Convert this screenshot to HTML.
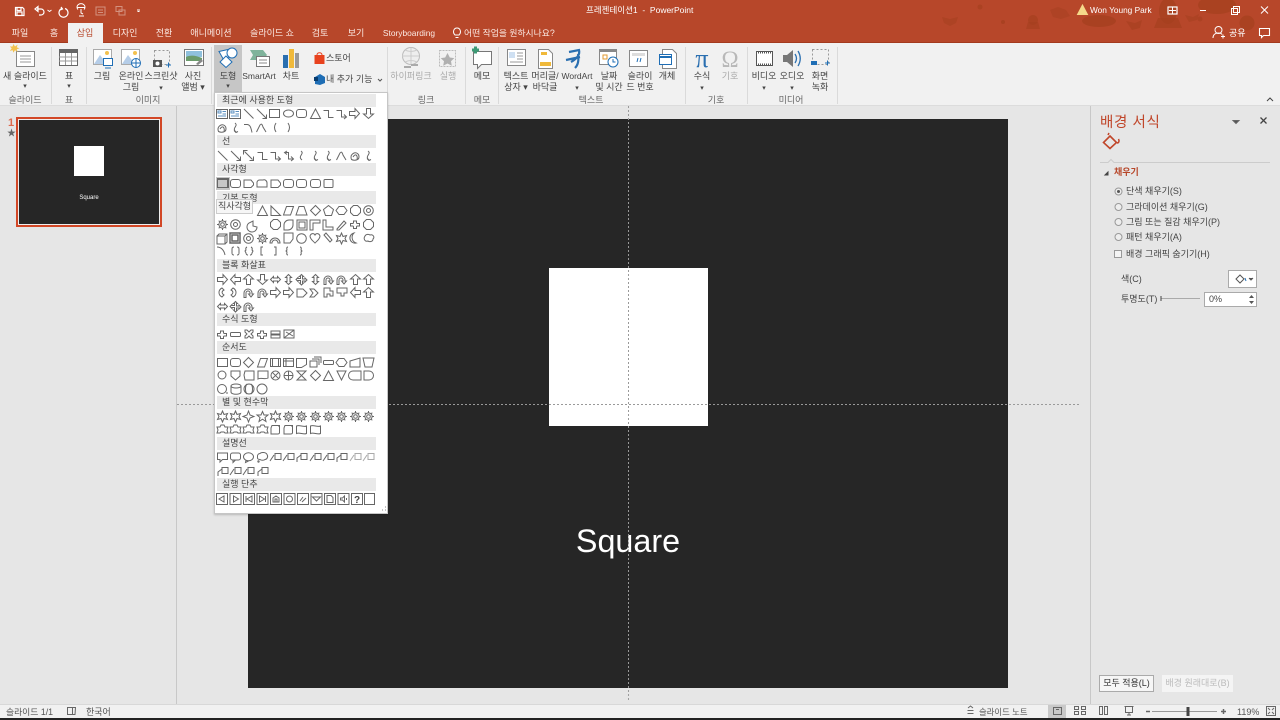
<!DOCTYPE html>
<html lang="ko"><head><meta charset="utf-8"><title>프레젠테이션1 - PowerPoint</title>
<style>
*{box-sizing:border-box}
html,body{margin:0;padding:0;width:1280px;height:720px;overflow:hidden;background:#e6e6e6;font-family:"Liberation Sans","Noto Sans CJK KR",sans-serif;font-size:9px;color:#444}
.a{position:absolute}
.t{position:absolute;transform:translateX(-50%);white-space:nowrap;line-height:10.5px;text-align:center}
.l{position:absolute;white-space:nowrap;line-height:12px}
.w{color:#fff}
.tab{color:#fbe9e3;top:28px;font-size:9px;line-height:11px}
.g{color:#666;top:95px}
.d{color:#aaa}
.hd{position:absolute;left:217px;width:159px;height:13px;background:#e9e9e9;color:#444;padding-left:5px;line-height:12px;font-size:9px}
.sep{position:absolute;top:47px;width:1px;height:57px;background:#dadada}
</style></head><body>
<div class="a" style="left:0;top:0;width:1280px;height:43px;background:#b7472a"></div>
<div class="a" style="left:0;top:42px;width:1280px;height:1px;background:#a33a1e"></div>
<svg class="a" style="left:900px;top:0" width="380" height="42" fill="#a5401f">
<path d="M42 17l8 2 8-2-2 6-6 3-6-3z" opacity=".55"/>
<circle cx="80" cy="7" r="2.500" opacity=".7"/><circle cx="103" cy="22" r="2" opacity=".8"/><circle cx="18" cy="0" r="0"/>
<circle cx="133" cy="20" r="5" opacity=".7"/><path d="M128 22h10l2 7h-14z" opacity=".6"/>
<path d="M150 10l8-3 8 3 4 6-9 3-8-2z" opacity=".5"/>
<ellipse cx="199" cy="21" rx="17" ry="6" opacity=".8"/>
<ellipse cx="268" cy="11" rx="9" ry="13" opacity=".75"/><path d="M258 18h20l4 10h-28z" opacity=".7"/>
<path d="M226 21l9 2 7-3-2 8-8 2z" opacity=".6"/><path d="M285 15l8 2 6-3-2 6-8 2z" opacity=".55"/>
<ellipse cx="317" cy="5" rx="19" ry="9" opacity=".75"/>
<circle cx="347" cy="23" r="7.500" opacity=".75"/><circle cx="300" cy="19" r="2.500" opacity=".6"/>
</svg>
<!-- QAT -->
<svg class="a" style="left:0;top:0" width="150" height="22" fill="none" stroke="#fff" stroke-width="1.2">
<path d="M15.500 7.500h7l1.500 1.500v6.500h-8.500z"/><path d="M17 8v2.500h4V8M17 15v-3h5v3"/>
<path d="M35 9l3-2.500v5zM37 9h4a3 3 0 0 1 0 6h-2"/><path d="M47.500 10l2 1.500 2-1.500" stroke-width="1"/>
<path d="M65 8.500a4.500 4.500 0 1 1-3 0M61 7l1.500 2-2 .8"/>
<path d="M77 7.500h8M78 9.500a4 3.500 0 1 1 6 0 M81 9v4l2 1M79 16h5" stroke-width="1"/>
<g opacity=".4" stroke-width="1"><rect x="96" y="7" width="9" height="8"/><path d="M98 10h5M98 12.500h5"/><rect x="116" y="6.500" width="6" height="5"/><rect x="119" y="10" width="6" height="5"/></g>
<path d="M137 10h3M137.500 11.500h2" stroke-width="1"/>
</svg>
<div class="l w" style="left:586px;top:4px;font-size:8.500px">프레젠테이션1&nbsp; -&nbsp; PowerPoint</div>
<svg class="a" style="left:1076px;top:3px" width="204" height="36" fill="none" stroke="#fff">
<path d="M6.500 2l5 9.500h-10z" fill="#f5d98a" stroke="#f5d98a"/>
<rect x="92" y="4" width="9" height="7" stroke-width="1.200"/><path d="M96.500 4v7M93 7.500h7" stroke-width="1"/>
<path d="M124 7.500h6"/><rect x="155.500" y="5.500" width="6" height="6"/><rect x="157.500" y="3.500" width="6" height="6"/>
<path d="M185 3.500l7 7M192 3.500l-7 7"/>
</svg>
<div class="l w" style="left:1090px;top:4px;font-size:8.300px">Won Young Park</div>
<svg class="a" style="left:1210px;top:24px" width="70" height="18" fill="none" stroke="#fff"><circle cx="8.500" cy="6" r="3.500"/><path d="M3 14c0-3 2-5 5.500-5 1.500 0 3 .5 3.500 1.500M11 12.500h4M13 10.500v4"/><path d="M49.500 4.500h10v7h-6l-2 2v-2h-2z" stroke-width="1.100"/></svg>
<div class="l w" style="left:1229px;top:27px;font-size:9px">공유</div>
<!-- Tabs -->
<div class="a" style="left:68px;top:23px;width:35px;height:20px;background:#f1f1f1"></div>
<div class="t tab" style="left:20px">파일</div><div class="t tab" style="left:54px">홈</div>
<div class="t tab" style="left:85px;color:#b7472a">삽입</div><div class="t tab" style="left:125px">디자인</div>
<div class="t tab" style="left:164px">전환</div><div class="t tab" style="left:211px">애니메이션</div>
<div class="t tab" style="left:272px">슬라이드 쇼</div><div class="t tab" style="left:320px">검토</div>
<div class="t tab" style="left:356px">보기</div><div class="t tab" style="left:409px;font-size:8.400px">Storyboarding</div>
<svg class="a" style="left:452px;top:27px" width="10" height="12" fill="none" stroke="#fff"><path d="M3 8c-3-3-1-7 2-7s5 4 2 7zM3.500 10.500h3"/></svg>
<div class="l tab" style="left:464px;font-size:8.800px">어떤 작업을 원하시나요?</div>
<!-- Ribbon -->
<div class="a" style="left:0;top:43px;width:1280px;height:62px;background:#f1f1f1"></div>
<div class="a" style="left:0;top:105px;width:1280px;height:1px;background:#dcdcdc"></div>
<div class="a" style="left:214px;top:45px;width:28px;height:47px;background:#c6c6c6"></div>
<div class="sep" style="left:51px"></div><div class="sep" style="left:86px"></div><div class="sep" style="left:211px"></div><div class="sep" style="left:387px"></div><div class="sep" style="left:465px"></div><div class="sep" style="left:498px"></div><div class="sep" style="left:685px"></div><div class="sep" style="left:747px"></div><div class="sep" style="left:837px"></div>
<svg class="a" style="left:0;top:43px" width="860" height="50" fill="none" stroke-width="1">
<!-- new slide -->
<rect x="16.500" y="8.500" width="18" height="15" fill="#fff" stroke="#888"/><path d="M20 13h11M20 16h11M20 19h11" stroke="#999"/><path d="M15 4l2 3 3-2-1 3 3 1-3 1 1 3-3-2-2 3-1-3-3 1 2-3-2-2 3 0z" fill="#f2c14e" stroke="#f2c14e" transform="translate(3 -1) scale(.7)"/>
<!-- table -->
<rect x="59.500" y="6.500" width="18" height="16" fill="#fff" stroke="#666"/><rect x="59" y="6" width="19" height="4" fill="#666"/><path d="M59 14h18M59 18h18M65.500 10v12M71.500 10v12" stroke="#999"/>
<!-- picture -->
<rect x="93.500" y="6.500" width="18" height="15" fill="#fff" stroke="#aaa"/><path d="M94 21l6-9 7 9z" fill="#b5cde8"/><circle cx="107" cy="10" r="2" fill="#f2c14e"/><rect x="103.500" y="15.500" width="9" height="7" fill="#fff" stroke="#1f6eb5"/><path d="M105 25h6" stroke="#1f6eb5"/>
<!-- online -->
<rect x="121.500" y="6.500" width="18" height="15" fill="#fff" stroke="#aaa"/><path d="M122 21l6-9 7 9z" fill="#b5cde8"/><circle cx="135" cy="10" r="2" fill="#f2c14e"/><circle cx="136" cy="20" r="4.500" fill="#fff" stroke="#1f6eb5"/><path d="M131.500 20h9M136 15.500v9" stroke="#1f6eb5"/>
<!-- screenshot -->
<rect x="154.500" y="7.500" width="15" height="14" stroke="#999" stroke-dasharray="2 2"/><rect x="153" y="17" width="9" height="7" fill="#555"/><circle cx="157.500" cy="20.500" r="2" fill="#fff"/><path d="M166 22h5M168.500 19.500v5" stroke="#1f6eb5"/>
<!-- album -->
<rect x="184.500" y="6.500" width="19" height="16" fill="#fff" stroke="#777"/><rect x="186" y="8" width="16" height="6" fill="#8fc0dc"/><path d="M186 14c4-2 9-2 16 1v3h-16z" fill="#6b9b6b"/><path d="M196 21l5-5 2 2-5 4z" fill="#888"/>
<!-- shapes -->
<path d="M219 8.500l9-2 1 7-5 4z" fill="#fff" stroke="#1f6eb5"/><circle cx="232" cy="10" r="5" fill="#fff" stroke="#1f6eb5"/><path d="M226 13l6 6-6 5.500-6-5.500z" fill="#fff" stroke="#1f6eb5"/>
<!-- smartart -->
<path d="M250 7h13l4 5-4 5h-13l3-5z" fill="#7fb39b"/><rect x="256.500" y="13.500" width="13" height="10" fill="#fff" stroke="#777"/><path d="M259 17h8M259 20h8" stroke="#888"/>
<!-- chart -->
<rect x="283" y="12" width="5" height="13" fill="#2a6fb0"/><rect x="289" y="6" width="5" height="19" fill="#f0b93a"/><rect x="295" y="10" width="4" height="15" fill="#999"/>
<!-- store -->
<rect x="314.500" y="12" width="10" height="9" fill="#e8421e"/><path d="M317 12c0-3 5-3 5 0" stroke="#e8421e"/>
<path d="M315 34l5-3 5 3v6l-5 2-5-1z" fill="#1f6eb5"/><rect x="314" y="34" width="4" height="4" fill="#083c6e"/>
<path d="M378 36l2 2 2-2" stroke="#555"/>
<!-- hyperlink -->
<circle cx="411" cy="13" r="8.500" fill="#eee" stroke="#bbb"/><path d="M402 13h17M411 4.500v17M405 7c4 2 8 2 12 0M405 19c4-2 8-2 12 0" stroke="#ccc"/><path d="M404 24h7M411 22h7" stroke="#aaa" stroke-width="2"/>
<!-- action -->
<rect x="439.500" y="7.500" width="16" height="16" stroke="#bbb" stroke-dasharray="2 1"/><path d="M447.500 10l2.300 4.500 4.500.6-3.300 3.100.8 4.500-4.300-2.200-4.300 2.200.8-4.500-3.300-3.100 4.500-.6z" fill="#b0b0b0"/>
<!-- comment -->
<path d="M473.500 8.500h18v13h-10l-4 4v-4h-4z" fill="#fff" stroke="#777"/><path d="M472 7h7M475.500 3.500v7" stroke="#3c9a75" stroke-width="3"/>
<!-- textbox -->
<rect x="507.500" y="6.500" width="18" height="16" fill="#fff" stroke="#888"/><path d="M517 10h6M517 13h6M517 16h6M510 19h13" stroke="#999"/><rect x="509" y="9" width="6" height="6" fill="#cfe0f2"/>
<!-- header -->
<path d="M538.500 6.500h10l4 4v15h-14z" fill="#fff" stroke="#888"/><rect x="541" y="9" width="6" height="3" fill="#f0b93a"/><rect x="540" y="19" width="11" height="4" fill="#f0b93a"/>
<!-- wordart -->
<path d="M569 9l10-2c1 4-1 8-8 12M578 11c1 6 0 11-3 14M566 17l14-3" stroke="#2a6fb0" stroke-width="2.200"/>
<!-- date -->
<rect x="599.500" y="6.500" width="17" height="15" fill="#fff" stroke="#888"/><rect x="599" y="6" width="18" height="3" fill="#888"/><rect x="603" y="12" width="4" height="4" stroke="#e09a30"/><circle cx="613" cy="19" r="5" fill="#fff" stroke="#1f6eb5"/><path d="M613 16v3h2.500" stroke="#1f6eb5"/>
<!-- slide number -->
<rect x="629.500" y="7.500" width="18" height="16" fill="#fff" stroke="#888"/><rect x="632" y="10" width="13" height="3" fill="#ddd"/><path d="M637 19l1-4M640 19l1-4" stroke="#1f6eb5"/>
<!-- object -->
<path d="M662.500 6.500h10l4 4v15h-14z" fill="#fff" stroke="#888"/><rect x="659.500" y="11.500" width="12" height="10" fill="#fff" stroke="#1f6eb5"/><path d="M660 14h11" stroke="#1f6eb5" stroke-width="2"/>
<!-- pi, omega -->
<text x="702" y="24" text-anchor="middle" fill="#2a6fb0" stroke="none" font-size="26" font-family="Liberation Serif">π</text>
<text x="730" y="24" text-anchor="middle" fill="#b8b8b8" stroke="none" font-size="23" font-family="Liberation Serif">Ω</text>
<!-- video -->
<rect x="756.500" y="8.500" width="16" height="14" fill="#fff" stroke="#555"/><path d="M756 9.500h17M756 21.500h17" stroke="#555" stroke-width="2" stroke-dasharray="1 1"/>
<!-- audio -->
<path d="M783 12h4l6-5v17l-6-5h-4z" fill="#777"/><path d="M795 11c2 3 2 6 0 9M798 8c3 5 3 10 0 15" stroke="#2a6fb0" stroke-width="1.300"/>
<!-- rec -->
<rect x="812.500" y="6.500" width="16" height="15" stroke="#999" stroke-dasharray="2 2"/><rect x="811" y="18" width="6" height="4" fill="#1f6eb5"/><path d="M825 20h5M827.500 17.500v5" stroke="#1f6eb5"/>
</svg>
<div class="t" style="left:25px;top:71px">새 슬라이드</div><div class="t" style="left:25px;top:82px;font-size:7px">▾</div>
<div class="t" style="left:69px;top:71px">표</div><div class="t" style="left:69px;top:82px;font-size:7px">▾</div>
<div class="t" style="left:102px;top:71px">그림</div>
<div class="t" style="left:131px;top:71px">온라인<br>그림</div>
<div class="t" style="left:161px;top:71px">스크린샷<br><span style="font-size:7px">▾</span></div>
<div class="t" style="left:193px;top:71px">사진<br>앨범 ▾</div>
<div class="t" style="left:228px;top:71px">도형</div><div class="t" style="left:228px;top:82px;font-size:7px">▾</div>
<div class="t" style="left:259px;top:71px;font-size:8.500px">SmartArt</div>
<div class="t" style="left:291px;top:71px">차트</div>
<div class="l" style="left:326px;top:52px">스토어</div>
<div class="l" style="left:326px;top:73px">내 추가 기능</div>
<div class="t d" style="left:411px;top:71px">하이퍼링크</div><div class="t d" style="left:448px;top:71px">실행</div>
<div class="t" style="left:482px;top:71px">메모</div>
<div class="t" style="left:516px;top:71px">텍스트<br>상자 ▾</div>
<div class="t" style="left:545px;top:71px">머리글/<br>바닥글</div>
<div class="t" style="left:577px;top:71px;font-size:8.500px">WordArt<br><span style="font-size:7px">▾</span></div>
<div class="t" style="left:609px;top:71px">날짜<br>및 시간</div>
<div class="t" style="left:640px;top:71px">슬라이<br>드 번호</div>
<div class="t" style="left:667px;top:71px">개체</div>
<div class="t" style="left:702px;top:71px">수식<br><span style="font-size:7px">▾</span></div>
<div class="t d" style="left:730px;top:71px">기호</div>
<div class="t" style="left:764px;top:71px">비디오<br><span style="font-size:7px">▾</span></div>
<div class="t" style="left:792px;top:71px">오디오<br><span style="font-size:7px">▾</span></div>
<div class="t" style="left:820px;top:71px">화면<br>녹화</div>
<div class="t g" style="left:25px">슬라이드</div><div class="t g" style="left:69px">표</div><div class="t g" style="left:148px">이미지</div><div class="t g" style="left:426px">링크</div><div class="t g" style="left:482px">메모</div><div class="t g" style="left:591px">텍스트</div><div class="t g" style="left:716px">기호</div><div class="t g" style="left:791px">미디어</div>
<svg class="a" style="left:1265px;top:96px" width="10" height="8" fill="none" stroke="#444"><path d="M2 5l3-3 3 3"/></svg>
<!-- Left pane -->
<div class="a" style="left:176px;top:106px;width:1px;height:598px;background:#c8c8c8"></div>
<div class="l" style="left:8px;top:117px;color:#dd6a4d;font-size:11px;font-weight:bold">1</div>
<div class="l" style="left:7px;top:127px;color:#666;font-size:9px">★</div>
<div class="a" style="left:16px;top:117px;width:146px;height:110px;border:2px solid #d24726;background:#eee;padding:1px">
<div style="width:140px;height:104px;background:#262626;position:relative;top:0">
<div class="a" style="left:55px;top:26px;width:30px;height:30px;background:#fff"></div>
<div class="t w" style="left:70px;top:73px;font-size:6px">Square</div></div></div>
<!-- Slide -->
<div class="a" style="left:248px;top:119px;width:760px;height:569px;background:#262626"></div>
<div class="a" style="left:549px;top:268px;width:159px;height:158px;background:#fff"></div>
<div class="t" style="left:628px;top:519px;font-size:32.300px;line-height:44px;color:#fff">Square</div>
<svg class="a" style="left:0;top:0" width="1280" height="720" fill="none"><path d="M628.500 106V700" stroke="#999" stroke-dasharray="2 2"/><path d="M177 404.500H1079" stroke="#999" stroke-dasharray="2 2"/></svg>
<!-- Right pane -->
<div class="a" style="left:1090px;top:106px;width:190px;height:598px;background:#e6e6e6;border-left:1px solid #c8c8c8"></div>
<div class="l" style="left:1100px;top:114px;color:#c0462a;font-size:14.500px;line-height:18px;letter-spacing:.6px">배경 서식</div>
<svg class="a" style="left:1095px;top:110px" width="185" height="200" fill="none" stroke="#666">
<path d="M138 10.500l3 3 3-3z" fill="#555"/><path d="M165.500 7.500l6 6M171.500 7.500l-6 6" stroke="#444" stroke-width="1.300"/>
<path d="M15 26l6.500 6.500-6.500 6-6.500-6z" stroke="#c0462a" stroke-width="1.600"/><path d="M13 25l1-2M22 33c2 0 2.500-2 1.500-4" stroke="#c0462a" stroke-width="1.500"/>
<path d="M5 52.500h8l3-3 3 3h156" stroke="#ccc" fill="#e6e6e6"/>
<path d="M10 65l3-3v3z" fill="#444" stroke="#444"/>
<g fill="#eee" stroke="#999"><circle cx="23.500" cy="81.500" r="3.500"/><circle cx="23.500" cy="97" r="3.500"/><circle cx="23.500" cy="112" r="3.500"/><circle cx="23.500" cy="127" r="3.500"/></g><circle cx="23.500" cy="81.500" r="1.500" fill="#555" stroke="none"/>
<rect x="19.500" y="140.500" width="7" height="7" fill="#f4f4f4" stroke="#999"/>
<path d="M66 188.500h39" stroke="#aaa"/><path d="M66 186v5" stroke="#444"/>
</svg>
<div class="l" style="left:1114px;top:166px;color:#b7472a;font-size:9px;font-weight:bold">채우기</div>
<div class="l" style="left:1126px;top:185px">단색 채우기(S)</div>
<div class="l" style="left:1126px;top:201px">그라데이션 채우기(G)</div>
<div class="l" style="left:1126px;top:216px">그림 또는 질감 채우기(P)</div>
<div class="l" style="left:1126px;top:231px">패턴 채우기(A)</div>
<div class="l" style="left:1126px;top:248px">배경 그래픽 숨기기(H)</div>
<div class="l" style="left:1121px;top:273px">색(C)</div>
<div class="l" style="left:1121px;top:293px">투명도(T)</div>
<div class="a" style="left:1228px;top:270px;width:29px;height:18px;background:#fff;border:1px solid #aaa"></div>
<svg class="a" style="left:1228px;top:270px" width="29" height="18" fill="none" stroke="#555"><path d="M8 9l4-4 4 4-4 4z"/><path d="M17 8l1 3" stroke="#1f6eb5"/><path d="M21 8l2 2 2-2" fill="#555"/></svg>
<div class="a" style="left:1204px;top:292px;width:53px;height:15px;background:#fff;border:1px solid #aaa;padding-left:4px;line-height:13px">0%</div>
<svg class="a" style="left:1248px;top:293px" width="8" height="13" fill="#555"><path d="M1 5l2.500-3 2.500 3zM1 8l2.500 3 2.500-3z"/></svg>
<div class="a" style="left:1099px;top:675px;width:55px;height:17px;background:#f6f6f6;border:1px solid #aaa;text-align:center;line-height:15px;color:#333">모두 적용(L)</div>
<div class="a" style="left:1162px;top:675px;width:71px;height:17px;background:#f4f4f4;text-align:center;line-height:16px;color:#bbb">배경 원래대로(B)</div>
<!-- Status -->
<div class="a" style="left:0;top:704px;width:1280px;height:14px;background:#f1f1f1;border-top:1px solid #d8d8d8"></div>
<div class="a" style="left:0;top:718px;width:1280px;height:2px;background:#222"></div>
<div class="l" style="left:6px;top:706px;color:#555;font-size:8.800px">슬라이드 1/1</div>
<div class="l" style="left:86px;top:706px;color:#555">한국어</div>
<div class="l" style="left:979px;top:706px;color:#555;font-size:8.400px">슬라이드 노트</div>
<div class="a" style="left:1048px;top:705px;width:18px;height:13px;background:#c9c9c9"></div>
<svg class="a" style="left:0;top:704px" width="1280" height="14" fill="none" stroke="#666">
<path d="M67.500 3.500h5v7h-5zM72.500 3.500h3l-.5 7h-2.500" />
<path d="M968 4l2.500-2 2.500 2M967.500 6.500h6M967.500 9.500h6"/>
<rect x="1053.500" y="3.500" width="8" height="7"/><path d="M1056 5.500h3"/>
<rect x="1074.500" y="2.500" width="4" height="3"/><rect x="1081.500" y="2.500" width="4" height="3"/><rect x="1074.500" y="7.500" width="4" height="3"/><rect x="1081.500" y="7.500" width="4" height="3"/>
<rect x="1099.500" y="2.500" width="3" height="8"/><rect x="1104.500" y="2.500" width="3" height="8"/>
<path d="M1124.500 2.500h9M1125.500 2.500v6h7v-6M1129 8.500v2M1127 11h4"/>
<path d="M1146 7.500h4" stroke-width="1.500"/><path d="M1152 7.500h65" stroke="#999"/><path d="M1188 3v9" stroke="#444" stroke-width="3"/>
<path d="M1221 7.500h5M1223.500 5v5" stroke-width="1.500"/>
<rect x="1266.500" y="2.500" width="9" height="9"/><path d="M1268 4l2 2M1274 4l-2 2M1268 10l2-2M1274 10l-2-2"/>
</svg>
<div class="l" style="left:1237px;top:706px;color:#555">119%</div>
<!-- Shapes dropdown -->
<div class="a" style="left:214px;top:92px;width:174px;height:422px;background:#fff;border:1px solid #c6c6c6;box-shadow:0 1px 2px rgba(0,0,0,.2)"></div>
<div class="hd" style="top:94px">최근에 사용한 도형</div>
<div class="hd" style="top:135px">선</div>
<div class="hd" style="top:163px">사각형</div>
<div class="hd" style="top:191px;line-height:14px">기본 도형</div>
<div class="hd" style="top:259px">블록 화살표</div>
<div class="hd" style="top:313px">수식 도형</div>
<div class="hd" style="top:341px">순서도</div>
<div class="hd" style="top:396px">별 및 현수막</div>
<div class="hd" style="top:437px">설명선</div>
<div class="hd" style="top:478px">실행 단추</div>
<div class="a" style="left:216px;top:177px;width:14px;height:13px;background:#c6c6c6"></div>
<svg class="a" style="left:0;top:0" width="400" height="520" fill="none" stroke="#666" stroke-width="1">
<defs>
<g id="r"><rect x=".5" y="1.500" width="10" height="8"/></g>
<g id="q"><rect x=".5" y="1.500" width="10" height="8" rx="2.500"/></g>
<g id="e"><ellipse cx="5.500" cy="5.500" rx="5" ry="3.500"/></g>
<g id="c"><circle cx="5.500" cy="5.500" r="4.800"/></g>
<g id="c2"><circle cx="5.500" cy="5.500" r="4.800"/><circle cx="5.500" cy="5.500" r="2"/></g>
<g id="t"><path d="M5.500 1l5 9.500H.5z"/></g>
<g id="rt"><path d="M1 1v9.500h9.500z"/></g>
<g id="pg"><path d="M3.500 1.500h7l-3 8.500h-7z"/></g>
<g id="tz"><path d="M3 1.500h5l3 8.500H0z"/></g>
<g id="d"><path d="M5.500 .5l5 5-5 5-5-5z"/></g>
<g id="pn"><path d="M5.500 .5l5 4-2 6h-6l-2-6z"/></g>
<g id="hx"><path d="M3 1.500h5l3 4-3 4H3l-3-4z"/></g>
<g id="oc"><path d="M3.500 .5h4l3 3v4l-3 3h-4l-3-3v-4z"/></g>
<g id="ln"><path d="M1 1l9.500 9.500"/></g>
<g id="la"><path d="M1 1l9 9M10.500 6.500v4h-4"/></g>
<g id="lb"><path d="M1.500 1.500l8 8M10.500 6.500v4h-4M.5 4.500v-4h4"/></g>
<g id="el"><path d="M.5 2.500h5v7h5"/></g>
<g id="ea"><path d="M.5 2.500h5v6.500h4M8 6.500l2.500 2.500L8 11"/></g>
<g id="eb"><path d="M2.500 2.500h3v6.500h4M8 6.500l2.500 2.500L8 11M4 1L1.500 2.500 4 4.500"/></g>
<g id="cv"><path d="M5 1c4 3-4 5 1 9"/></g>
<g id="cw"><path d="M5 1c4 3-4 5 1 9M4 8.500l2 2 2-1"/></g>
<g id="ar"><path d="M.5 3.500h5.500V.5l4.500 5-4.500 5v-3H.5z"/></g>
<g id="al"><path d="M10.500 3.500H5V.5L.5 5.500l4.500 5v-3h5.500z"/></g>
<g id="au"><path d="M3.500 10.500V5h-3L5.500 .5l5 4.500h-3v5.500z"/></g>
<g id="ad"><path d="M3.500 .5V6h-3l5 4.500 5-4.500h-3V.5z"/></g>
<g id="lr"><path d="M.5 5.500l3-3v1.500h4V2.500l3 3-3 3V7h-4v1.500z"/></g>
<g id="ud"><path d="M5.500 .5l3 3H7v4h1.500l-3 3-3-3H4v-4H2.500z"/></g>
<g id="qa"><path d="M5.500 .5l2 2h-1v2.500H9v-1l2 2-2 2v-1H6.500V9h1l-2 2-2-2h1V6.500H2v1l-2-2 2-2v1h2.500V2.500h-1z"/></g>
<g id="bn"><path d="M1 10.500V6a4 4 0 0 1 8 0v1h1.500L8 10 5.500 7H7V6a2 2 0 0 0-4 0v4.500z"/></g>
<g id="ft"><path d="M1.500 9.500c-2-5 3-8 6-6 2 1.500 2 5 0 6-2 1-4 1-6 0z"/><path d="M3 7c3-5 5 0 4 2"/></g>
<g id="cl"><path d="M.5 9C2 4 6 3 8 5l2.500 4"/></g>
<g id="fb"><path d="M1 2.500h3c3 0 4 3 5 8"/></g>
<g id="fr"><path d="M.5 10l3.500-7c1.500-2 2.500 0 3 2l3 5"/></g>
<g id="pl"><path d="M3.500 2h3v1.500a1 1 0 0 0 1 1h2V7h-2a1 1 0 0 0-1 1v1.500h-3V8a1 1 0 0 0-1-1h-2V4.500h2a1 1 0 0 0 1-1z"/></g>
<g id="mn"><rect x=".5" y="3.500" width="10" height="4" rx="1"/></g>
<g id="sq"><path d="M1 2h7l2.500 3v2L8 9.500H1z"/></g>
<g id="s1"><rect x="1" y="1.500" width="9" height="8" rx="1"/><path d="M3 1.500h6"/></g>
<g id="sa"><path d="M5.500 0l1.500 3.500 3.500-1-1.500 3 1.500 3-3.500-1L5.500 11 4 7.500l-3.500 1 1.500-3-1.500-3 3.500 1z"/></g>
<g id="st"><path d="M5.500 .5l1.500 3.500h4L8 6.500l1 4-3.500-2.300L2 10.500l1-4L0 4h4z"/></g>
<g id="s4"><path d="M5.500 0l1.500 4 4 1.500-4 1.500-1.500 4-1.500-4L0 5.500 4 4z"/></g>
<g id="gr"><circle cx="5.500" cy="5.500" r="3.600"/><circle cx="5.500" cy="5.500" r="1.800"/><path d="M5.500 0v2M5.500 9v2M0 5.500h2M9 5.500h2M1.700 1.700l1.300 1.300M8 8l1.300 1.300M9.300 1.700L8 3M3 8L1.700 9.300"/></g>
<g id="ba"><path d="M0 3h3l1-2h3l1 2h3l-1 3 1 3H8l-1-1H4L3 9H0l1-3z"/></g>
<g id="sc"><path d="M2 1.500h7.500v7c0 1-1 1.500-2 1.500H1V4z"/><path d="M9.500 1.500c-1 0-1 1 0 1"/></g>
<g id="fl"><path d="M.5 2c3-1.500 7 1.500 10 0v7.500c-3 1.500-7-1.500-10 0z"/></g>
<g id="ca"><path d="M.5 1h10v6.500H5.500L3 10V7.500H.5z"/></g>
<g id="cb"><rect x=".5" y="1" width="10" height="7" rx="2"/><path d="M3 8v2.500L5.500 8"/></g>
<g id="cc"><ellipse cx="5.500" cy="4.800" rx="5" ry="4"/><path d="M3 8l-.5 2.500L5.500 9"/></g>
<g id="cd"><path d="M3 1.500c1-1.500 6-1.500 7 1 1.500 2 0 5-2 5-1 1-4 1-5 0-2 0-3-1-2.500-2.500C0 3 1.500 1.500 3 1.500z"/><circle cx="1.500" cy="9.500" r=".7"/></g>
<g id="ce"><rect x="5" y="1.500" width="6" height="6"/><path d="M0 9l4-6"/></g>
<g id="cf"><rect x="5" y="1.500" width="6" height="6"/><path d="M1 10V6l4-3"/></g>
<g id="cg" stroke="#aaa"><rect x="5" y="1.500" width="6" height="6"/><path d="M0 9l4-6"/></g>
<g id="b" stroke="#666"><rect x=".5" y=".5" width="11" height="11"/></g>
<g id="i1"><rect x=".5" y="1.500" width="11" height="9" stroke="#666"/><path d="M2 3h3v2H2zM6.500 3.500h3.500M6.500 6h3.500M2 8h8" stroke="#5a8fc0"/></g>
</defs>
<use href="#i1" x="216" y="108"/><use href="#i1" x="229" y="108"/><use href="#ln" x="243" y="108"/><use href="#la" x="256" y="108"/><use href="#r" x="269" y="108"/><use href="#e" x="283" y="108"/><use href="#q" x="296" y="108"/><use href="#t" x="310" y="108"/><use href="#el" x="323" y="108"/><use href="#ea" x="336" y="108"/><use href="#ar" x="349" y="108"/><use href="#ad" x="363" y="108"/>
<use href="#ft" x="217" y="122"/><use href="#cw" x="230" y="122"/><use href="#fb" x="243" y="122"/><use href="#fr" x="256" y="122"/><path d="M276 123c-2 3-2 6 0 9M288 123c2 3 2 6 0 9"/>
<use href="#ln" x="217" y="150"/><use href="#la" x="230" y="150"/><use href="#lb" x="243" y="150"/><use href="#el" x="257" y="150"/><use href="#ea" x="270" y="150"/><use href="#eb" x="283" y="150"/><use href="#cv" x="296" y="150"/><use href="#cw" x="310" y="150"/><use href="#cw" x="323" y="150"/><use href="#fr" x="336" y="150"/><use href="#ft" x="350" y="150"/><use href="#cw" x="363" y="150"/>
<use href="#r" x="217" y="178"/><use href="#q" x="230" y="178"/><use href="#sq" x="243" y="178"/><path d="M257 187v-5a3 3 0 0 1 3-2h3a3 3 0 0 1 4 3v4z"/><use href="#sq" x="270" y="178"/><use href="#q" x="283" y="178"/><use href="#q" x="296" y="178"/><use href="#q" x="310" y="178"/><use href="#s1" x="323" y="178"/>
<use href="#t" x="257" y="205"/><use href="#rt" x="270" y="205"/><use href="#pg" x="283" y="205"/><use href="#tz" x="296" y="205"/><use href="#d" x="310" y="205"/><use href="#pn" x="323" y="205"/><use href="#hx" x="336" y="205"/><use href="#oc" x="350" y="205"/><use href="#c2" x="363" y="205"/>
<use href="#gr" x="217" y="219"/><use href="#c2" x="230" y="219"/><path d="M249 223a5 5 0 1 0 8 4l-4-1v-5z"/><use href="#oc" x="270" y="219"/><path d="M284 225a5 5 0 0 1 5-5h4v5a5 5 0 0 1-5 5h-4z" /><path d="M297 220h10v10h-10zM299 222h6v6h-6z"/><path d="M310 220h10v3h-7v7h-3z"/><path d="M323 220h3v7h7v3h-10z"/><path d="M337 229l7-8 2 2-7 7-2 0z"/><use href="#pl" x="350" y="219"/><use href="#oc" x="363" y="219"/><path d="M365 222v7a4 1.500 0 0 0 8 0v-7a4 1.500 0 0 0-8 0 4 1.500 0 0 0 8 0" transform="translate(-350 0) translate(350 0)" opacity="0"/>
<path d="M217 236h8v8h-8zM217 236l2-2h8v8l-2 2M225 236l2-2"/><path d="M230 233h10v10h-10zM232 235h6v6h-6z" stroke-width="1.500"/><use href="#c2" x="243" y="233"/><use href="#gr" x="257" y="233"/><path d="M270 243a5 5 0 0 1 10 0h-2a3 3 0 0 0-6 0z"/><path d="M284 233h9v6l-3 4h-6z"/><use href="#c" x="296" y="233"/><path d="M310 236c1-3 4-3 5-1 1-2 4-2 5 1 0 3-3 5-5 7-2-2-5-4-5-7z"/><path d="M324 235l6 7 2-2-6-7z"/><use href="#sa" x="336" y="233"/><path d="M354 233a5 5 0 1 0 2 10 6 6 0 0 1-2-10z"/><path d="M365 236c1-2 4-2 5-1 3-1 5 2 3 4 0 3-4 3-5 2-3 1-5-2-3-5z"/>
<path d="M217 247c4 0 7 3 8 8M234 247c-2 0-2 1-2 3v3c0 1 0 2 2 2M237 247c2 0 2 1 2 3v3c0 1 0 2-2 2M247 247c-2 1-1 3-1 3l-1 1 1 2c0 2 2 2 2 2M251 247c2 1 1 3 1 3l1 1-1 2c0 2-2 2-2 2M263 247h-2v8h2M274 247h2v8h-2M288 247c-2 0-1 3-1 3l-1 1 1 1s-1 3 1 3M300 247c2 0 1 3 1 3l1 1-1 1s1 3-1 3"/>
<use href="#ar" x="217" y="274"/><use href="#al" x="230" y="274"/><use href="#au" x="243" y="274"/><use href="#ad" x="257" y="274"/><use href="#lr" x="270" y="274"/><use href="#ud" x="283" y="274"/><use href="#qa" x="296" y="274"/><use href="#ud" x="310" y="274"/><use href="#bn" x="323" y="274"/><use href="#bn" x="336" y="274"/><use href="#au" x="350" y="274"/><use href="#au" x="363" y="274"/>
<path d="M222 288c-4 2-4 7 0 9l2-2c-3-2-2-4 0-5zM233 288c4 2 4 7 0 9l-2-2c3-2 2-4 0-5z"/><use href="#bn" x="243" y="287"/><use href="#bn" x="257" y="287"/><use href="#ar" x="270" y="287"/><use href="#ar" x="283" y="287"/><path d="M297 289h6l4 4-4 4h-6z"/><path d="M310 289h4l4 4-4 4h-4l3-4z"/><path d="M324 288h6v3h3v5h-3v-2h-3v3h-3z"/><path d="M337 288h10v5h-3v3h-3v-3h-4z"/><use href="#al" x="350" y="287"/><use href="#au" x="363" y="287"/>
<use href="#lr" x="217" y="301"/><use href="#qa" x="230" y="301"/><use href="#bn" x="243" y="301"/>
<use href="#pl" x="217" y="329"/><use href="#mn" x="230" y="329"/><path d="M245 330l2 0 2 2 2-2 2 0v2l-2 2 2 2v2h-2l-2-2-2 2h-2v-2l2-2-2-2z"/><use href="#pl" x="257" y="329"/><path d="M271 331h9v3h-9zM271 335h9v3h-9z"/><path d="M284 330h10v8h-10zM284 338l10-8M286 332l7 4"/>
<use href="#r" x="217" y="357"/><use href="#q" x="230" y="357"/><use href="#d" x="243" y="357"/><use href="#pg" x="257" y="357"/><path d="M270.500 358.500h10v8h-10zM272.500 358.500v8M278.500 358.500v8"/><path d="M283.500 358.500h10v8h-10zM283.500 361h10M286 358.500v8"/><path d="M296.500 358.500h10v6l-5 3h-5z"/><path d="M310 361h7v6h-7zM312 359h7v6M314 357h7v6"/><use href="#mn" x="323" y="357"/><use href="#hx" x="336" y="357"/><path d="M350 361l10-3v9h-10z"/><path d="M363 358h11l-2 9h-7z"/>
<circle cx="222" cy="375" r="4"/><path d="M231 371h9v5l-4.500 4-4.500-4z"/><path d="M245 371h9v9h-9l-1-5z"/><path d="M258 371h10v7c-3 2-7-1-10 1z"/><circle cx="275.500" cy="375.500" r="4.500"/><path d="M272.300 372.300l6.400 6.400M278.700 372.300l-6.400 6.400"/><circle cx="288.500" cy="375.500" r="4.500"/><path d="M284 375.500h9M288.500 371v9"/><path d="M297 371h9l-9 9h9z"/><use href="#d" x="310" y="370"/><use href="#t" x="323" y="370"/><path d="M337 371h9l-4.500 9z"/><path d="M353 371h8v9h-8a4.500 4.500 0 0 1 0-9z"/><path d="M364 371h5a4.500 4.500 0 0 1 0 9h-5z"/>
<circle cx="222" cy="389" r="4.500"/><path d="M226 393h2"/><ellipse cx="236" cy="386" rx="5" ry="2"/><path d="M231 386v6c0 3 10 3 10 0v-6"/><ellipse cx="249" cy="389" rx="5" ry="5"/><path d="M247 384c-2 2-2 8 0 10M251 384c2 2 2 8 0 10"/><circle cx="262" cy="389" r="5"/>
<use href="#sa" x="217" y="411"/><use href="#sa" x="230" y="411"/><use href="#s4" x="243" y="411"/><use href="#st" x="257" y="411"/><use href="#sa" x="270" y="411"/><use href="#gr" x="283" y="411"/><use href="#gr" x="296" y="411"/><use href="#gr" x="310" y="411"/><use href="#gr" x="323" y="411"/><use href="#gr" x="336" y="411"/><use href="#gr" x="350" y="411"/><use href="#gr" x="363" y="411"/>
<use href="#ba" x="217" y="424"/><use href="#ba" x="230" y="424"/><use href="#ba" x="243" y="424"/><use href="#ba" x="257" y="424"/><use href="#sc" x="270" y="424"/><use href="#sc" x="283" y="424"/><use href="#fl" x="296" y="424"/><use href="#fl" x="310" y="424"/>
<use href="#ca" x="217" y="452"/><use href="#cb" x="230" y="452"/><use href="#cc" x="243" y="452"/><use href="#cd" x="257" y="452"/><use href="#ce" x="270" y="452"/><use href="#ce" x="283" y="452"/><use href="#cf" x="296" y="452"/><use href="#ce" x="310" y="452"/><use href="#ce" x="323" y="452"/><use href="#cf" x="336" y="452"/><use href="#cg" x="350" y="452"/><use href="#cg" x="363" y="452"/>
<use href="#cf" x="217" y="466"/><use href="#ce" x="230" y="466"/><use href="#ce" x="243" y="466"/><use href="#cf" x="257" y="466"/>
<g transform="translate(216 493)"><use href="#b"/><path d="M8 3v6L3 6z"/></g><g transform="translate(229.500 493)"><use href="#b"/><path d="M4 3v6l5-3z"/></g><g transform="translate(243 493)"><use href="#b"/><path d="M3 3v6M9 3v6L4 6z"/></g><g transform="translate(256.500 493)"><use href="#b"/><path d="M9 3v6M3 3v6l5-3z"/></g><g transform="translate(270 493)"><use href="#b"/><path d="M3 9V5l3-2 3 2v4zM5 9V6h2v3"/></g><g transform="translate(283.500 493)"><use href="#b"/><circle cx="6" cy="6" r="3"/></g><g transform="translate(297 493)"><use href="#b"/><path d="M3 8l3-4M5 9l4-4"/></g><g transform="translate(310.500 493)"><use href="#b"/><path d="M2 4h8l-4 4z"/></g><g transform="translate(324 493)"><use href="#b"/><path d="M3 2.500h4l2 2v5H3z"/></g><g transform="translate(337.500 493)"><use href="#b"/><path d="M3 5h2l2-2v6L5 7H3zM9 5v2"/></g><text x="357" y="503" font-size="10" fill="#444" stroke="none" text-anchor="middle" font-weight="bold">?</text><g transform="translate(351 493)"><use href="#b"/></g><g transform="translate(364 493)"><rect x=".5" y=".5" width="10" height="11" fill="#fff" stroke="#666"/></g>
<path d="M385 507h1M382 510h1M385 510h1" stroke="#888"/>
<rect x="217.500" y="178.500" width="11" height="9" stroke="#666"/>
</svg>
<!-- tooltip -->
<div class="a" style="left:216px;top:199px;width:37px;height:15px;background:#f6f6f6;border:1px solid #ccc;text-align:center;line-height:12px;color:#444">직사각형</div>
</body></html>
